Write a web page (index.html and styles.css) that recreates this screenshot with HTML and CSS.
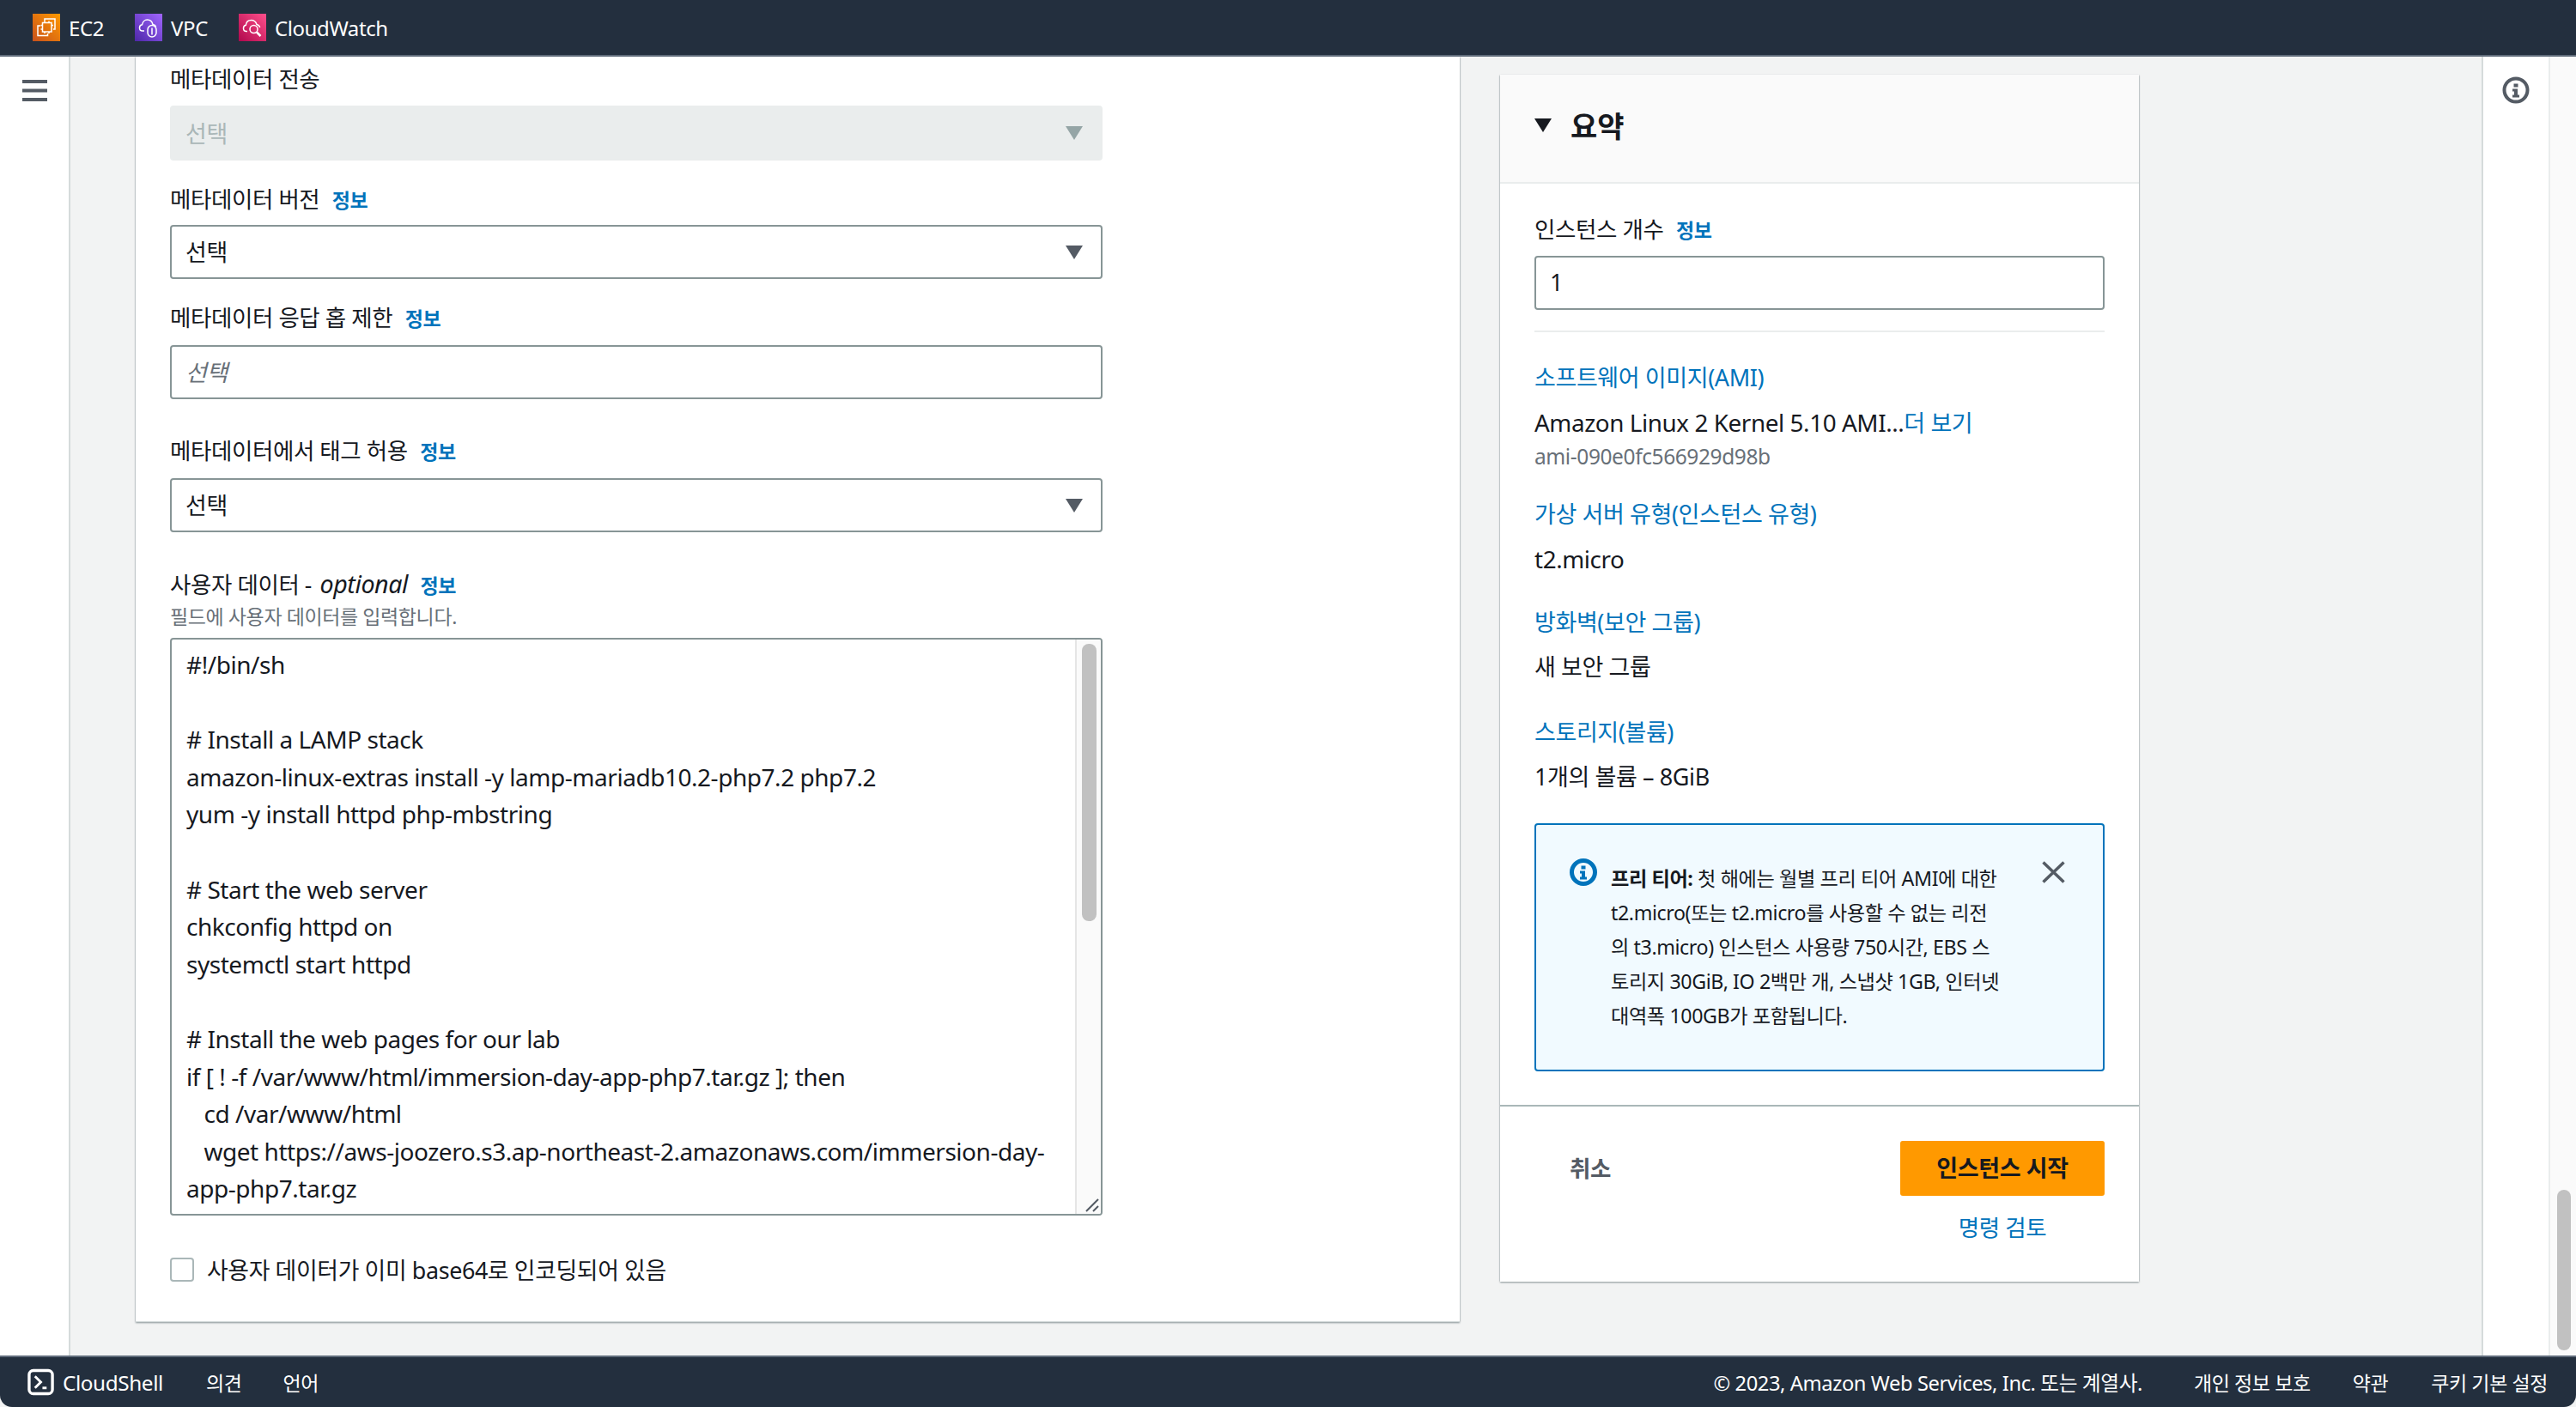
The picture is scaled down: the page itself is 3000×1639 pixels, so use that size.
FILE: index.html
```
<!DOCTYPE html>
<html lang="ko">
<head>
<meta charset="utf-8">
<title>인스턴스 시작</title>
<link rel="stylesheet" href="styles.css">
</head>
<body>
<div class="app">
  <header class="topbar">
    <a class="service">
      <svg class="svc-icon" viewBox="0 0 32 32"><defs><linearGradient id="g1" x1="0" y1="1" x2="1" y2="0"><stop offset="0" stop-color="#c8511b"/><stop offset="1" stop-color="#ff9900"/></linearGradient></defs><rect width="32" height="32" fill="url(#g1)"/><g fill="none" stroke="#fff" stroke-width="1.5"><path d="M9 14H6v11.5h11.5V23"/><rect x="11.5" y="10.5" width="10.5" height="10.5"/><path d="M14 8.5V6h12v12h-2M14 21v2M19 21v2M14 8.500v2M19 8.500v2M9.500 13.500h2M9.500 18h2M22 13.500h2"/></g></svg>
      <span>EC2</span>
    </a>
    <a class="service service--vpc">
      <svg class="svc-icon" viewBox="0 0 32 32"><defs><linearGradient id="g2" x1="0" y1="1" x2="1" y2="0"><stop offset="0" stop-color="#4d27a8"/><stop offset="1" stop-color="#a166ff"/></linearGradient></defs><rect width="32" height="32" fill="url(#g2)"/><g fill="none" stroke="#fff" stroke-width="1.5"><path d="M11 20H9c-2.500 0-3.500-2-3.500-3.500 0-2 1.300-3.500 3-3.700C9 9.500 11.500 7 14.500 7c3.500 0 5.800 2.500 6.500 5.500 1.600.3 3 1 3.700 2.500"/><rect x="15" y="13.5" width="10" height="13.5" rx="5"/><path d="M20 16.500v8"/></g></svg>
      <span>VPC</span>
    </a>
    <a class="service service--cw">
      <svg class="svc-icon" viewBox="0 0 32 32"><defs><linearGradient id="g3" x1="0" y1="1" x2="1" y2="0"><stop offset="0" stop-color="#b0084d"/><stop offset="1" stop-color="#ff4f8b"/></linearGradient></defs><rect width="32" height="32" fill="url(#g3)"/><g fill="none" stroke="#fff" stroke-width="1.5"><path d="M10 20.500H9c-2.500 0-3.500-2-3.500-3.500 0-2 1.300-3.300 2.800-3.700C8.800 9.500 11.500 7.500 14.500 7.500c3 0 5.500 2 6.500 5 1.800.4 3.200 1.700 3.700 3.500"/><circle cx="17.5" cy="18" r="4.5"/><path d="M21 21.500l4.500 4.500" stroke-width="2.5"/></g></svg>
      <span>CloudWatch</span>
    </a>
  </header>

  <div class="middle">
    <nav class="side-nav">
      <svg class="menu-icon" viewBox="0 0 29 25"><path d="M0 2h29M0 12.500h29M0 23h29" stroke="#545b64" stroke-width="4"/></svg>
    </nav>

    <main class="content">
      <section class="form-card">
        <div class="field">
          <div class="label">메타데이터 전송</div>
          <div class="control control--disabled"><span>선택</span><i class="caret caret--disabled"></i></div>
        </div>
        <div class="field field--tight">
          <div class="label">메타데이터 버전 <a class="info">정보</a></div>
          <div class="control"><span>선택</span><i class="caret"></i></div>
        </div>
        <div class="field field--tight">
          <div class="label">메타데이터 응답 홉 제한 <a class="info">정보</a></div>
          <div class="control control--input"><span class="placeholder">선택</span></div>
        </div>
        <div class="field field--tags">
          <div class="label">메타데이터에서 태그 허용 <a class="info">정보</a></div>
          <div class="control control--input"><span>선택</span><i class="caret"></i></div>
        </div>
        <div class="field field--wide">
          <div class="label label--tall">사용자 데이터 - <em class="optional">optional</em> <a class="info">정보</a></div>
          <div class="hint">필드에 사용자 데이터를 입력합니다.</div>
          <div class="editor">
            <div class="editor-text">#!/bin/sh

# Install a LAMP stack
amazon-linux-extras install -y lamp-mariadb10.2-php7.2 php7.2
yum -y install httpd php-mbstring

# Start the web server
chkconfig httpd on
systemctl start httpd

# Install the web pages for our lab
if [ ! -f /var/www/html/immersion-day-app-php7.tar.gz ]; then
   cd /var/www/html
   wget https://aws-joozero.s3.ap-northeast-2.amazonaws.com/immersion-day-
app-php7.tar.gz</div>
            <div class="editor-track"><div class="editor-thumb"></div></div>
            <svg class="resizer" viewBox="0 0 16 16"><path d="M1 15L15 1M9 15l6-6" stroke="#545b64" stroke-width="2" fill="none"/></svg>
          </div>
        </div>
        <label class="check-row"><span class="checkbox"></span><span>사용자 데이터가 이미 base64로 인코딩되어 있음</span></label>
      </section>

      <aside class="summary">
        <div class="summary-card">
          <div class="summary-head"><i class="tri"></i><h2>요약</h2></div>
          <div class="summary-body">
            <div class="label label--count">인스턴스 개수 <a class="info">정보</a></div>
            <div class="control control--count"><span>1</span></div>
            <hr class="rule">
            <a class="s-link s-link--first">소프트웨어 이미지(AMI)</a>
            <div class="s-value s-value--latin">Amazon Linux 2 Kernel 5.10 AMI...<a class="more">더 보기</a></div>
            <div class="s-sub">ami-090e0fc566929d98b</div>
            <a class="s-link s-link--after-sub">가상 서버 유형(인스턴스 유형)</a>
            <div class="s-value s-value--latin">t2.micro</div>
            <a class="s-link">방화벽(보안 그룹)</a>
            <div class="s-value">새 보안 그룹</div>
            <a class="s-link s-link--storage">스토리지(볼륨)</a>
            <div class="s-value">1개의 볼륨 – 8GiB</div>
            <div class="alert">
              <svg class="alert-icon" viewBox="0 0 32 32"><circle cx="16" cy="16" r="13.5" fill="none" stroke="#0073bb" stroke-width="5"/><path d="M13.500 8.500h5v4h-5zM12 14.500h6v7h2v3h-8v-3h2v-4h-2z" fill="#0073bb"/></svg>
              <p class="alert-text"><b>프리 티어:</b> 첫 해에는 월별 프리 티어 AMI에 대한<br>t2.micro(또는 t2.micro를 사용할 수 없는 리전<br>의 t3.micro) 인스턴스 사용량 750시간, EBS 스<br>토리지 30GiB, IO 2백만 개, 스냅샷 1GB, 인터넷<br>대역폭 100GB가 포함됩니다.</p>
              <svg class="alert-close" viewBox="0 0 27 25"><path d="M1.500 1l24 23M25.500 1l-24 23" stroke="#545b64" stroke-width="3.5" fill="none"/></svg>
            </div>
          </div>
        </div>
        <div class="action-card">
          <div class="action-row">
            <a class="cancel">취소</a>
            <button class="primary">인스턴스 시작</button>
          </div>
          <div class="review-row"><a class="review">명령 검토</a></div>
        </div>
      </aside>
    </main>

    <aside class="tools">
      <svg class="tools-icon" viewBox="0 0 32 32"><circle cx="16" cy="16" r="13.5" fill="none" stroke="#545b64" stroke-width="4"/><path d="M13.500 8.500h5v4h-5zM12 14.500h6v7h2v3h-8v-3h2v-4h-2z" fill="#545b64"/></svg>
    </aside>
    <div class="page-scroll"><div class="page-thumb"></div></div>
  </div>

  <footer class="footer">
    <a class="cloudshell">
      <svg class="cs-icon" viewBox="0 0 32 32"><rect x="2" y="2" width="28" height="28" rx="5" fill="none" stroke="#fff" stroke-width="3.5"/><path d="M9 9l7 7-7 7" fill="none" stroke="#fff" stroke-width="3"/><path d="M18 21.500h5v3h-5z" fill="#fff"/></svg>
      <span>CloudShell</span>
    </a>
    <a class="foot-item foot-item--feedback">의견</a>
    <a class="foot-item foot-item--lang">언어</a>
    <div class="foot-right">
      <span class="copyright">© 2023, Amazon Web Services, Inc. 또는 계열사.</span>
      <a class="foot-link foot-link--privacy">개인 정보 보호</a>
      <a class="foot-link foot-link--terms">약관</a>
      <a class="foot-link foot-link--cookie">쿠키 기본 설정</a>
    </div>
  </footer>
</div>
</body>
</html>
```
FILE: styles.css
```
* { box-sizing: border-box; }
html, body { margin: 0; height: 100%; overflow: hidden; background: #3a0d08; }
body {
  font-family: "Noto Sans", "Noto Sans CJK KR", sans-serif;
  font-size: 26.5px;
  color: #16191f;
  letter-spacing: -0.4px;
}
a { color: inherit; text-decoration: none; }

.app { display: flex; flex-direction: column; height: 1639px; background: #f2f3f3; }

.topbar {
  flex: none; height: 66px; background: #232f3e; border-bottom: 2px solid #5f6b7a;
  display: flex; align-items: center; padding-left: 38px; color: #fff;
  font-size: 24px;
}
.service { display: flex; align-items: center; gap: 10px; margin-right: 36px; }
.svc-icon { width: 32px; height: 32px; display: block; }

.middle { flex: none; height: 1513px; display: flex; overflow: hidden; }

.side-nav { flex: none; width: 82px; background: #fff; border-right: 2px solid #d5dbdb; padding: 27px 0 0 26px; }
.menu-icon { display: block; width: 29px; height: 25px; }

.content { flex: 1; display: flex; align-items: flex-start; padding-left: 76px; min-width: 0; }

.form-card {
  flex: none; width: 1542px; height: 1474px; background: #fff;
  padding: 5px 40px 0;
  border-bottom: 1px solid #d5dbdb;
  box-shadow: 0 1px 2px rgba(0,28,36,.45), 1px 0 1px -1px rgba(0,28,36,.4), -1px 0 1px -1px rgba(0,28,36,.4);
}

.field { width: 1086px; }
.field--tight { margin-top: 24px; }
.field--tags { margin-top: 39px; }
.field--wide { margin-top: 40px; }
.label { line-height: 42px; padding-bottom: 2px; }
.label--tall { padding-bottom: 0; }
.info { color: #0073bb; font-size: 23px; font-weight: 700; margin-left: 8px; line-height: 1; }
.optional { font-style: italic; line-height: 1; font-size: 28.6px; margin-left: 3px; }

.control {
  height: 63px; margin-top: 7px; border: 2px solid #879596; border-radius: 4px;
  background: #fff; padding: 0 16px 2px; display: flex; align-items: center; justify-content: space-between;
  font-size: 27px;
}
.control--disabled { background: #eaeded; border-color: #eaeded; color: #aab7b8; margin-top: 8px; height: 64px; }
.control--input { margin-top: 9px; }
.placeholder { font-style: italic; color: #687078; }
.caret { width: 0; height: 0; border-left: 10px solid transparent; border-right: 10px solid transparent; border-top: 16px solid #545b64; margin: 2px 5px 0 0; }
.caret--disabled { border-top-color: #95a5a6; }

.hint { font-size: 23px; line-height: 32px; color: #687078; }
.editor {
  position: relative; margin-top: 9px; height: 673px; border: 2px solid #879596; border-radius: 4px;
  display: flex; overflow: hidden; background: #fff;
}
.editor-text {
  flex: 1; min-width: 0; padding: 8px 0 0 17px; white-space: pre; line-height: 43.6px; overflow: hidden;
  font-size: 28px; letter-spacing: -0.46px;
}
.editor-track { flex: none; width: 30px; background: #fafafa; border-left: 2px solid #e5e5e5; padding: 5px 5px 0 6px; }
.editor-thumb { height: 323px; background: #c1c1c1; border-radius: 8px; }
.resizer { position: absolute; right: 2px; bottom: 2px; width: 16px; height: 16px; }

.check-row { display: flex; align-items: center; gap: 15px; margin-top: 49px; line-height: 27px; font-size: 26.9px; }
.checkbox { width: 28px; height: 28px; border: 2px solid #aab7b8; border-radius: 4px; background: #fff; }

.summary { flex: none; width: 744px; margin-left: 47px; margin-top: 21px; background: #fff; box-shadow: 0 1px 2px rgba(0,28,36,.45), 1px 0 1px -1px rgba(0,28,36,.4), -1px 0 1px -1px rgba(0,28,36,.4); }
.summary-card { border-bottom: 2px solid #aab7b8; height: 1202px; }
.summary-head { height: 127px; background: #fafafa; border-bottom: 2px solid #eaeded; display: flex; align-items: center; padding: 0 0 8px 40px; gap: 22px; }
.summary-head h2 { margin: 0; font-size: 34px; font-weight: 700; letter-spacing: 0; }
.tri { width: 0; height: 0; border-left: 10.5px solid transparent; border-right: 10.5px solid transparent; border-top: 16px solid #16191f; }
.summary-body { padding: 32px 40px 0; }
.control--count { margin-top: 8px; height: 63px; }
.rule { border: 0; height: 2px; background: #eaeded; margin: 24px 0 0; }

.s-link { display: block; color: #0073bb; line-height: 44px; margin-top: 30px; font-size: 27px; }
.s-link--first { margin-top: 31px; }
.s-link--after-sub { margin-top: 27px; }
.s-link--storage { margin-top: 32px; }
.s-value { line-height: 44px; margin-top: 8px; font-size: 27px; }
.s-value--latin { font-size: 27.8px; }
.more { color: #0073bb; font-size: 27px; line-height: 1; }
.s-sub { color: #687078; font-size: 24.5px; line-height: 36px; }

.alert { position: relative; margin-top: 32px; height: 289px; background: #f1faff; border: 2px solid #0073bb; border-radius: 4px; padding: 39px 0 0 39px; display: flex; gap: 16px; }
.alert-icon { flex: none; width: 32px; height: 32px; }
.alert-text { margin: 3px 0 0; line-height: 40px; font-size: 23.2px; white-space: nowrap; }
.alert-close { position: absolute; left: 589px; top: 42px; width: 27px; height: 26px; }

.action-card { height: 201px; margin-top: 3px; padding: 37px 40px 0; }
.action-row { display: flex; align-items: center; justify-content: space-between; }
.cancel { color: #545b64; font-weight: 700; margin: 0 0 4px 41px; }
.primary { width: 238px; height: 64px; border: 0; border-radius: 3px; background: #f90; font: inherit; font-size: 27px; font-weight: 700; letter-spacing: inherit; color: #16191f; padding: 0 0 3px; }
.review-row { display: flex; justify-content: flex-end; margin-top: 15px; }
.review { width: 238px; text-align: center; color: #0073bb; line-height: 44px; }

.tools { flex: none; width: 80px; background: #fff; border-left: 2px solid #d5dbdb; border-right: 2px solid #eaeded; padding: 23px 0 0 22px; }
.tools-icon { display: block; width: 32px; height: 32px; }
.page-scroll { flex: none; width: 30px; background: #fafafa; display: flex; flex-direction: column; justify-content: flex-end; padding: 0 6px 6px 8px; }
.page-thumb { height: 187px; background: #c1c1c1; border-radius: 8px; }

.footer {
  flex: none; height: 60px; background: #232f3e; border-top: 2px solid #5f6b7a; color: #fff;
  display: flex; align-items: center; padding-left: 32px; font-size: 23px;
  border-radius: 0 0 14px 14px;
}
.cloudshell { display: flex; align-items: center; gap: 10px; font-size: 24.3px; }
.cs-icon { width: 31px; height: 32px; display: block; }
.foot-item--feedback { margin-left: 50px; }
.foot-item--lang { margin-left: 48px; }
.foot-right { margin-left: auto; padding-right: 33px; display: flex; align-items: center; }
.copyright { font-size: 23.7px; }
.foot-link--privacy { margin-left: 60px; }
.foot-link--terms { margin-left: 49px; }
.foot-link--cookie { margin-left: 50px; }
```
